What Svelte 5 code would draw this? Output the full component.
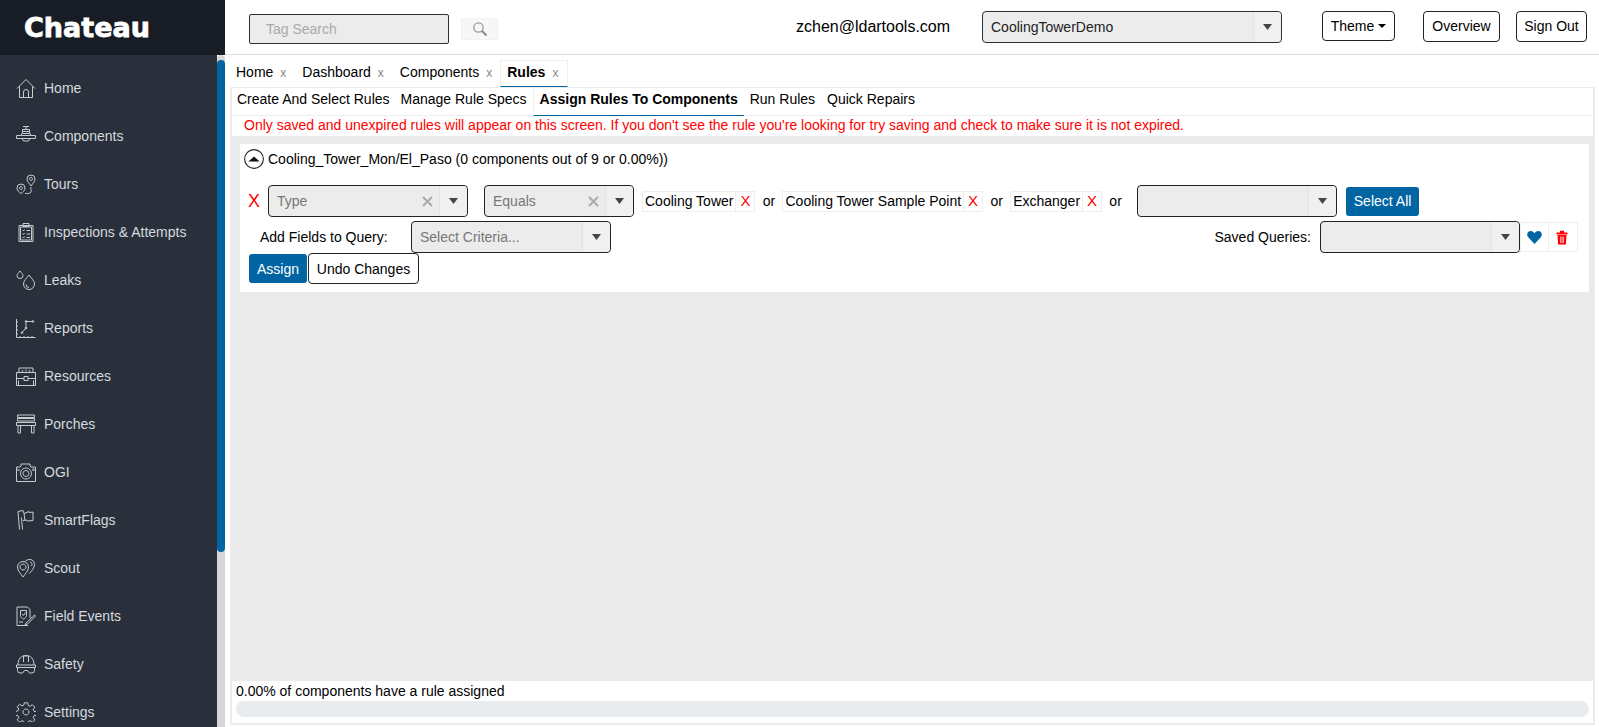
<script lang="ts">
const navItems = [
  { label: 'Home', paths: ['M1 10.500 10 1.500l9 9', 'M3.500 8.500v11h13v-11', 'M7.500 19.500V14a2.500 2.500 0 0 1 5 0v5.500'] },
  { label: 'Components', paths: ['M7 .5h6', 'M10 .5v3', 'M6.500 3.500h7v4h-7z', 'M6.500 5.500h7', 'M.5 9.500h5v-2M14.500 7.500v2h5v3H.5v-3', 'M5.500 9.500h9', 'M6 12.500l1.500 2.500h5l1.500-2.500'] },
  { label: 'Tours', paths: ['M15 12c-2-3-4-4.500-4-7a4 4 0 0 1 8 0c0 2.500-2 4-4 7z', 'M15 3.500a1.500 1.500 0 1 1-.01 0', 'M5 19.500c-2-1.500-4-3-4-5.500a4 4 0 0 1 8 0c0 2.500-2 4-4 5.500z', 'M5 12.500a1.500 1.500 0 1 1-.01 0', 'M15 13c-1 2 1 3 0 5s-4 1.500-6 1.500'] },
  { label: 'Inspections & Attempts', paths: ['M3 3.500h14v16H3z', 'M4.500 5h11v13h-11z', 'M7 1.500h6v3H7z', 'M6.500 8l1 1 1-1.500M10.500 8.500h3.500', 'M6.500 11.500l1 1 1-1.500M10.500 12h3.500', 'M6.500 15l1 1 1-1.500M10.500 15.500h3.500'] },
  { label: 'Leaks', paths: ['M4 1c1.500 2 3 3 3 4.500a3 3 0 0 1-6 0C1 4 2.500 3 4 1z', 'M13 5c2 3 5.500 5.500 5.500 9a5.500 5.500 0 0 1-11 0c0-3.500 3.500-6 5.500-9z', 'M10 14.500a3 3 0 0 0 3 3'] },
  { label: 'Reports', paths: ['M.5 1v18.500H19.500', 'M.5 4h1.500M.5 8h1.500M.5 12h1.500M.5 16h1.500', 'M4 19.500V18M8 19.500V18M12 19.500V18M16 19.500V18', 'M6 14.500l4-4.500V3.500h7', 'M6 14a.8.8 0 1 1-.01 0M10 9.500a.8.8 0 1 1-.01 0M10 2.700a.8.8 0 1 1-.01 0M17 2.700a.8.8 0 1 1-.01 0'] },
  { label: 'Resources', paths: ['M3 6.500V2h14v4.500', 'M.5 6.500h19v13H.5z', 'M.5 12.500h7.500M12 12.500h7.500', 'M8 10.500h4v4H8z', 'M6 6l1-2M10 3.500v2M14 6l-1-2', 'M2.500 19.500v-5M17.500 19.500v-5'] },
  { label: 'Porches', paths: ['M1.500 1h17v2.500h-17z', 'M1.500 4.500h17V7h-17z', 'M.5 8.500h19v3H.5z', 'M2 11.500v7.500h2.500v-7.500M15.500 11.500v7.500H18v-7.500'] },
  { label: 'OGI', paths: ['M.5 5h3.500l1-1V2h9v2l1 1h4.500v14.500H.5z', 'M10 6a5.500 5.500 0 1 1-.01 0', 'M10 8.500a3 3 0 1 1-.01 0', 'M16.500 7h1.500', 'M.5 8h3.500M16 8h3.500'] },
  { label: 'SmartFlags', paths: ['M2 1.500l5-1 1 3 5-2v1L17 2v8.500l-5 .5-2-1-3 .5', 'M2 1.500l1.500 18M5.500 7.500l1 12', 'M8 3.500l1 7'] },
  { label: 'Scout', paths: ['M7 19c-2-3-5.500-6-5.500-10a5.500 5.500 0 0 1 11 0c0 4-3.500 7-5.500 10z', 'M7 6a3 3 0 1 1-.01 0', 'M9 3.500C10 2 12 1.500 14 1.500c2.500 0 4.500 2 4.500 5 0 3.500-3 6.500-5 9', 'M14 4a2.500 2.500 0 0 1 1.500 4'] },
  { label: 'Field Events', paths: ['M14 12V3.500L11.500 1H1v18.500h11', 'M4.500 4.500h6v5c0 1.500-1.500 3-3 3.500-1.500-.5-3-2-3-3.500z', 'M6 8l1.500 1.500 2-3', 'M10 17l8.500-8 1 1L11 18.500l-2 .5z', 'M3 16h4'] },
  { label: 'Safety', paths: ['M2 11C2 5 5 1.500 10 1.500S18 5 18 11', 'M7.500 8V2h5v6', 'M.5 11h19v2.500H.5z', 'M1.500 13.500h17v3a2.500 2.500 0 0 1-2.500 2.500h-2.500l-2-2.500h-3L6.500 19H4a2.500 2.500 0 0 1-2.500-2.500z'] },
  { label: 'Settings', paths: ['M8.300.8h3.400l.5 2.700 1.900.8 2.300-1.600 2.400 2.400-1.600 2.300.8 1.900 2.700.5v3.400l-2.700.5-.8 1.900 1.600 2.300-2.400 2.400-2.300-1.600-1.900.8-.5 2.700H8.300l-.5-2.700-1.900-.8-2.300 1.600-2.400-2.400 1.600-2.300-.8-1.900-2.700-.5V9.400l2.700-.5.8-1.900-1.600-2.300 2.400-2.400 2.300 1.600 1.900-.8z', 'M10 7a3 3 0 1 1-.01 0'] },
];

const tabs = ['Home', 'Dashboard', 'Components', 'Rules'];
const subTabs = ['Create And Select Rules', 'Manage Rule Specs', 'Assign Rules To Components', 'Run Rules', 'Quick Repairs'];
const values = ['Cooling Tower', 'Cooling Tower Sample Point', 'Exchanger'];
</script>

{#snippet select(cls, text, clearable)}
	<div class="select {cls}">
		<span class="select-text">{text}</span>
		{#if clearable}
			<svg class="clear" width="11" height="11" viewBox="0 0 11 11" aria-hidden="true"><path d="M1 1l9 9M10 1l-9 9" /></svg>
		{/if}
		<span class="arrow">
			<svg class="caret" width="9" height="6" viewBox="0 0 9 6" aria-hidden="true"><path d="M0 0h9L4.500 6z" /></svg>
		</span>
	</div>
{/snippet}

<div class="app">
	<aside class="sidebar">
		<div class="brand">Chateau</div>
		<div class="nav-wrap">
			<nav class="nav">
				{#each navItems as item}
					<div class="nav-item">
						<svg class="nav-icon" width="20" height="20" viewBox="0 0 20 20" aria-hidden="true">
							{#each item.paths as d}<path {d} />{/each}
						</svg>
						<span>{item.label}</span>
					</div>
				{/each}
			</nav>
			<div class="scrollbar"><div class="thumb"></div></div>
		</div>
	</aside>

	<main class="main">
		<header class="topbar">
			<div class="tag-search">Tag Search</div>
			<button class="search-btn" aria-label="Search">
				<svg width="16" height="16" viewBox="0 0 16 16" aria-hidden="true">
					<circle cx="6.500" cy="6.500" r="4.700" fill="none" stroke="#9a9a9a" stroke-width="1.300" />
					<path d="M10 10l4.500 4.500" stroke="#8a8a8a" stroke-width="2" />
				</svg>
			</button>
			<div class="email">zchen@ldartools.com</div>
			{@render select('facility', 'CoolingTowerDemo', false)}
			<button class="btn-outline theme">Theme<i class="theme-caret"></i></button>
			<button class="btn-outline overview">Overview</button>
			<button class="btn-outline signout">Sign Out</button>
		</header>

		<div class="tabs">
			{#each tabs as tab}
				<div class="tab" class:active={tab === 'Rules'}>{tab}<span class="tab-x">x</span></div>
			{/each}
		</div>

		<section class="panel">
			<div class="subtabs">
				{#each subTabs as tab}
					<div class="subtab" class:active={tab === 'Assign Rules To Components'}>{tab}</div>
				{/each}
			</div>
			<div class="notice">Only saved and unexpired rules will appear on this screen. If you don't see the rule you're looking for try saving and check to make sure it is not expired.</div>

			<div class="content">
				<div class="card">
					<div class="card-title">
						<svg width="20" height="20" viewBox="0 0 20 20" aria-hidden="true">
							<circle cx="10" cy="10" r="9.400" fill="#fff" stroke="#222" stroke-width="1.100" />
							<path d="M4.500 12.500 10 7.500l5.500 5z" fill="#111" />
						</svg>
						<span>Cooling_Tower_Mon/El_Paso (0 components out of 9 or 0.00%))</span>
					</div>

					<div class="row query-row">
						<span class="remove">X</span>
						{@render select('type', 'Type', true)}
						{@render select('equals', 'Equals', true)}
						{#each values as value}
							<div class="chip"><span class="chip-text">{value}</span><span class="chip-x">X</span></div>
							<span class="or">or</span>
						{/each}
						{@render select('value', '', false)}
						<button class="btn-primary select-all">Select All</button>
					</div>

					<div class="row fields">
						<span class="fields-label">Add Fields to Query:</span>
						{@render select('criteria', 'Select Criteria...', false)}
						<span class="saved-label">Saved Queries:</span>
						{@render select('saved', '', false)}
						<div class="icon-box heart">
							<svg width="15" height="14" viewBox="0 0 15 14" aria-hidden="true">
								<path d="M7.500 14 1 7C-.8 4.500.5 1 3.800 1c1.700 0 3 1 3.700 2.300C8.200 2 9.500 1 11.200 1c3.300 0 4.600 3.500 2.800 6z" fill="#0065a2" />
							</svg>
						</div>
						<div class="icon-box trash">
							<svg width="12" height="15" viewBox="0 0 12 15" aria-hidden="true">
								<path d="M.5 2.500h11v2H.5zM4 2.500V.7h4v1.800M1.500 5h9l-.6 9.500H2.100zM4.400 6.500v6.500h1V6.500zM6.600 6.500v6.500h1V6.500z" fill="#f00" fill-rule="evenodd" />
							</svg>
						</div>
					</div>

					<div class="row actions">
						<button class="btn-primary assign">Assign</button>
						<button class="btn-outline undo">Undo Changes</button>
					</div>
				</div>
			</div>

			<div class="summary">
				<div class="summary-text">0.00% of components have a rule assigned</div>
				<div class="progress"></div>
			</div>
		</section>
	</main>
</div>

<style>
	:global(body) {
		margin: 0;
		background: #fff;
	}

	.app {
		display: flex;
		height: 727px;
		overflow: hidden;
		font-family: 'Liberation Sans', Arial, sans-serif;
		font-size: 14px;
		color: #000;
	}

	button {
		font: inherit;
		color: inherit;
		margin: 0;
		padding: 0;
		box-sizing: border-box;
	}

	/* Sidebar */
	.sidebar {
		width: 225px;
		flex: none;
		display: flex;
		flex-direction: column;
	}

	.brand {
		height: 55px;
		flex: none;
		box-sizing: border-box;
		padding: 9px 0 0 24px;
		background: #181d25;
		color: #fff;
		font-family: 'DejaVu Sans', sans-serif;
		font-weight: 700;
		font-size: 27px;
		line-height: 37px;
		-webkit-text-stroke: 0.8px #fff;
	}

	.nav-wrap {
		flex: 1;
		min-height: 0;
		display: flex;
	}

	.nav {
		flex: 1;
		background: #29303b;
		padding-top: 9px;
		overflow: hidden;
	}

	.nav-item {
		height: 48px;
		display: flex;
		align-items: center;
		gap: 8px;
		padding-left: 16px;
		color: #d6d9dd;
	}

	.nav-icon {
		flex: none;
		fill: none;
		stroke: #c8ccd1;
		stroke-width: 1;
	}

	.scrollbar {
		width: 8px;
		flex: none;
		background: #d6d6d6;
		border-radius: 4px 4px 0 0;
		padding-top: 5px;
	}

	.thumb {
		height: 492px;
		background: #0065a2;
		border-radius: 4px;
	}

	/* Top bar */
	.main {
		flex: 1;
		min-width: 0;
		display: flex;
		flex-direction: column;
	}

	.topbar {
		height: 55px;
		flex: none;
		box-sizing: border-box;
		border-bottom: 1px solid #ddd;
		display: flex;
		align-items: flex-start;
		padding-top: 11px;
	}

	.tag-search {
		width: 200px;
		height: 30px;
		box-sizing: border-box;
		margin: 3px 0 0 24px;
		padding-left: 16px;
		line-height: 28px;
		background: #ececec;
		border: 1px solid #29303b;
		border-radius: 2px;
		color: #aaa;
	}

	.search-btn {
		width: 37px;
		height: 22px;
		margin: 7px 0 0 12px;
		background: #f7f7f7;
		border: 1px solid #f2f2f2;
		display: flex;
		align-items: center;
		justify-content: center;
	}

	.email {
		margin: 5px 0 0 298px;
		font-size: 16px;
		line-height: 22px;
		width: 186px;
	}

	.select {
		height: 32px;
		box-sizing: border-box;
		display: flex;
		align-items: center;
		background: #ececec;
		border: 1px solid #222;
		border-radius: 4px;
		flex: none;
	}

	.select-text {
		flex: 1;
		padding-left: 8px;
		color: #777;
		white-space: nowrap;
	}

	.clear {
		flex: none;
		margin-right: 6px;
		fill: none;
		stroke: #aaa;
		stroke-width: 2;
	}

	.arrow {
		width: 28px;
		align-self: stretch;
		display: flex;
		align-items: center;
		justify-content: center;
		background: #f0f0f0;
		border-left: 1px solid #e2e2e2;
		border-radius: 0 4px 4px 0;
		box-sizing: border-box;
	}

	.caret {
		fill: #444;
	}

	.facility {
		width: 300px;
		border-color: #29303b;
	}

	.facility .select-text {
		color: #222;
	}

	.btn-outline {
		background: #fff;
		border: 1px solid #222;
		border-radius: 4px;
		text-align: center;
	}

	.theme {
		width: 73px;
		height: 30px;
		margin-left: 40px;
	}

	.theme-caret {
		display: inline-block;
		margin-left: 4px;
		vertical-align: 3px;
		border-top: 4px solid #000;
		border-left: 4px solid transparent;
		border-right: 4px solid transparent;
	}

	.overview {
		width: 77px;
		height: 31px;
		margin-left: 28px;
		padding-bottom: 2px;
	}

	.signout {
		width: 71px;
		height: 31px;
		margin-left: 16px;
		padding-bottom: 2px;
	}

	/* Tabs */
	.tabs {
		height: 32px;
		flex: none;
		display: flex;
		align-items: flex-end;
		padding-left: 4px;
	}

	.tab {
		height: 27px;
		box-sizing: border-box;
		padding: 0 6px;
		margin-right: 2px;
		line-height: 22px;
		border: 1px solid transparent;
		white-space: nowrap;
	}

	.tab.active {
		font-weight: 700;
		border-color: #eee #eee #0065a2;
		margin-left: -1px;
		padding-right: 9px;
	}

	.tab-x {
		margin-left: 7px;
		font-weight: 400;
		font-size: 12px;
		color: #888;
	}

	/* Panel */
	.panel {
		flex: 1;
		min-height: 0;
		margin: 0 4px 2px 5px;
		border: 2px solid #ececec;
		border-top-width: 1px;
		display: flex;
		flex-direction: column;
	}

	.subtabs {
		height: 28px;
		flex: none;
		box-sizing: border-box;
		display: flex;
		border-bottom: 1px solid #eee;
	}

	.subtab {
		padding: 0 6px;
		line-height: 23px;
		white-space: nowrap;
	}

	.subtab:first-child {
		padding-left: 5px;
		padding-right: 5px;
	}

	.subtab.active {
		font-weight: 700;
		border-left: 1px solid #eee;
		border-bottom: 1px solid #0065a2;
		box-sizing: border-box;
		height: 28px;
	}

	.notice {
		height: 20px;
		flex: none;
		padding-left: 12px;
		line-height: 19px;
		color: #f00;
	}

	.content {
		flex: 1;
		min-height: 0;
		background: #eaeaea;
		padding: 8px 4px 0 8px;
	}

	.card {
		height: 148px;
		background: #fff;
		box-sizing: border-box;
		padding: 5px 11px 0 4px;
	}

	.card-title {
		display: flex;
		align-items: center;
		gap: 4px;
		height: 20px;
	}

	.row {
		display: flex;
		align-items: center;
	}

	.query-row {
		height: 32px;
		margin-top: 16px;
	}

	.remove {
		width: 24px;
		flex: none;
		padding-left: 4px;
		box-sizing: border-box;
		color: #f00;
		font-size: 18px;
	}

	.type {
		width: 200px;
	}

	.equals {
		width: 150px;
		margin: 0 8px 0 16px;
	}

	.chip {
		display: flex;
		align-items: stretch;
		height: 21px;
		box-sizing: border-box;
		border: 1px solid #eee;
		line-height: 19px;
		white-space: nowrap;
	}

	.chip-text {
		padding: 0 2px;
	}

	.chip-x {
		border-left: 1px solid #eee;
		padding: 0 4px;
		color: #f00;
		font-size: 15px;
		line-height: 18px;
	}

	.or {
		width: 27px;
		text-align: center;
		flex: none;
	}

	.value {
		width: 200px;
		margin-left: 8px;
	}

	.btn-primary {
		background: #0065a2;
		color: #fff;
		border: none;
		border-radius: 3px;
	}

	.select-all {
		width: 73px;
		height: 29px;
		margin-left: 9px;
	}

	.fields {
		height: 32px;
		margin-top: 4px;
	}

	.fields-label {
		width: 167px;
		flex: none;
		padding-left: 16px;
		box-sizing: border-box;
	}

	.criteria {
		width: 200px;
	}

	.saved-label {
		margin-left: auto;
		margin-right: 9px;
	}

	.saved {
		width: 200px;
	}

	.icon-box {
		height: 30px;
		box-sizing: border-box;
		border: 1px solid #eee;
		display: flex;
		align-items: center;
		justify-content: center;
	}

	.heart {
		width: 29px;
	}

	.trash {
		width: 29px;
		border-left: none;
		padding-right: 2px;
	}

	.actions {
		padding-left: 5px;
	}

	.assign {
		width: 58px;
		height: 29px;
	}

	.undo {
		width: 111px;
		height: 31px;
		margin-left: 1px;
	}

	/* Bottom summary */
	.summary {
		height: 42px;
		flex: none;
		padding: 0 4px;
	}

	.summary-text {
		line-height: 20px;
	}

	.progress {
		height: 16px;
		background: #e9ecef;
		border-radius: 8px;
	}
</style>
